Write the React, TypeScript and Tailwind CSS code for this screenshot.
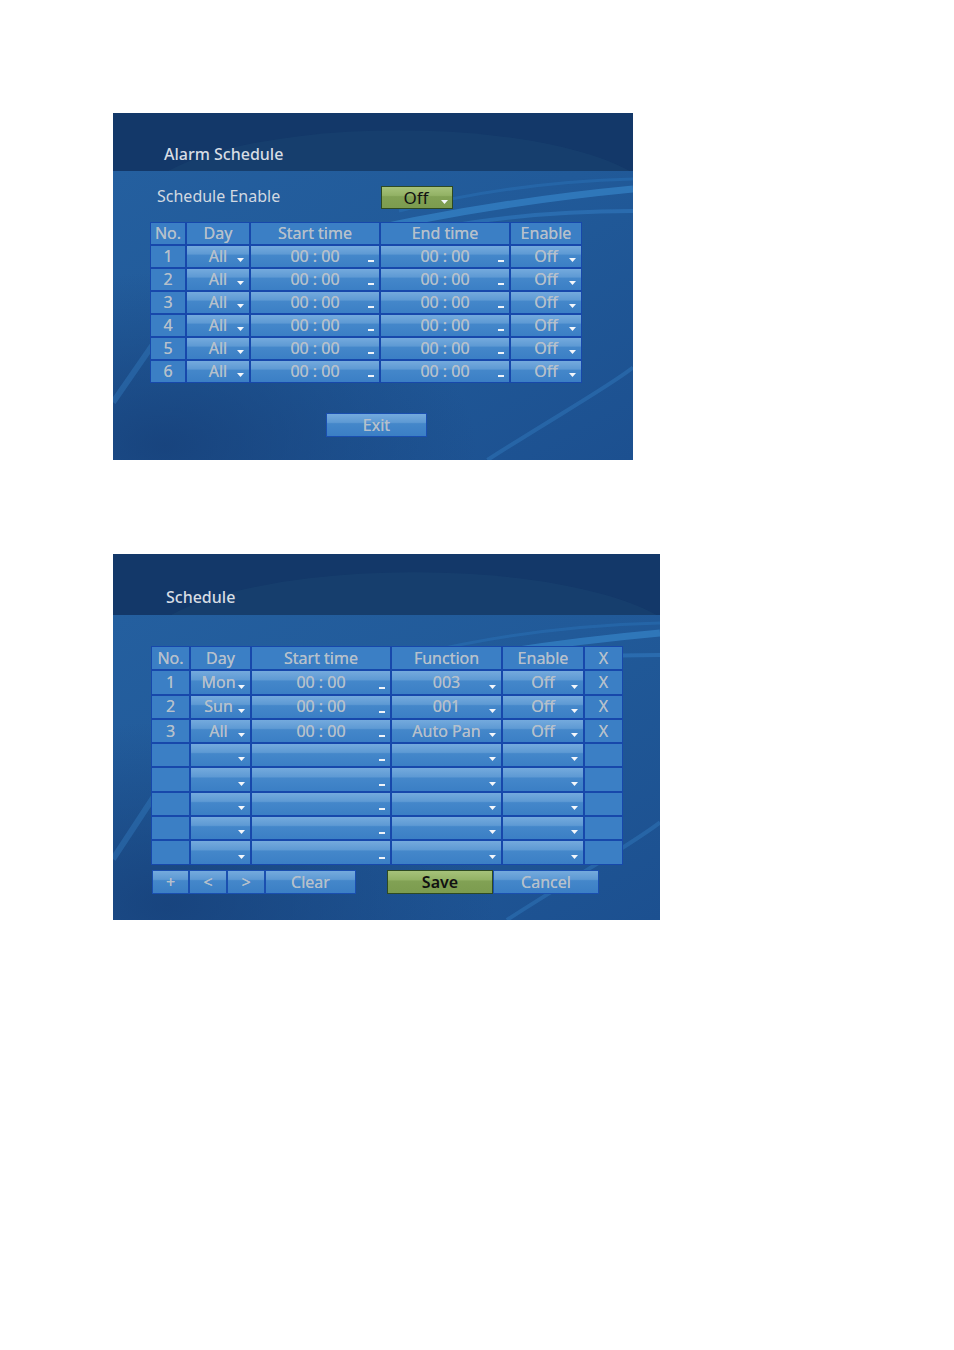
import React from "react";

const FONT = { fontFamily: '"Noto Sans", "DejaVu Sans", sans-serif' };

const cellGrad =
  "bg-[linear-gradient(to_bottom,#74aadd_0%,#5e9ad4_38%,#4487ca_44%,#3b7fc5_100%)]";
const flat = "bg-[#3b7fc5]";

function Arrow() {
  return (
    <svg
      className="absolute right-[5px] bottom-[5px]"
      width="7"
      height="4"
      viewBox="0 0 7 4"
    >
      <polygon points="0,0 7,0 3.5,4" fill="#f4f7fb" />
    </svg>
  );
}

function Dash() {
  return <div className="absolute right-[5px] bottom-[5px] w-[6px] h-[2px] bg-[#eef3f9]" />;
}

type Kind = "plain" | "head" | "drop" | "time" | "x";

function Cell({ kind, children, h }: { kind: Kind; children?: React.ReactNode; h: string }) {
  const bg = kind === "plain" || kind === "head" || kind === "x" ? flat : cellGrad;
  return (
    <div
      className={`relative flex items-center justify-center ${h} ${bg} text-[#b5c0cc] text-[16px] leading-none whitespace-nowrap`}
    >
      <span className="-mt-[1px] [text-shadow:0_0_0.4px_#b5c0cc]">{children}</span>
      {kind === "drop" && <Arrow />}
      {kind === "time" && <Dash />}
    </div>
  );
}

function BodyBg({ w, h }: { w: number; h: number }) {
  return (
    <svg
      className="absolute inset-0 pointer-events-none"
      width={w}
      height={h}
      viewBox={`0 0 ${w} ${h}`}
      preserveAspectRatio="none"
    >
      <defs>
        <linearGradient id={`g${w}`} x1="0" y1="0" x2="1" y2="1">
          <stop offset="0" stopColor="#245f9f" />
          <stop offset="0.45" stopColor="#215a99" />
          <stop offset="1" stopColor="#1c5090" />
        </linearGradient>
        <radialGradient id={`r${w}`} cx="0.1" cy="0.95" r="0.6">
          <stop offset="0" stopColor="#163f78" stopOpacity="0.8" />
          <stop offset="1" stopColor="#163f78" stopOpacity="0" />
        </radialGradient>
      </defs>
      <rect width={w} height={h} fill={`url(#g${w})`} />
      <rect width={w} height={h} fill={`url(#r${w})`} />
      <path
        d={`M ${w} 18 C ${w * 0.8} 28, ${w * 0.6} 45, ${w * 0.4} 70`}
        stroke="#3d8fd6"
        strokeOpacity="0.55"
        strokeWidth="7"
        fill="none"
      />
      <path
        d={`M ${w} 40 C ${w * 0.8} 40, ${w * 0.65} 52, ${w * 0.45} 75`}
        stroke="#3a8ad2"
        strokeOpacity="0.4"
        strokeWidth="4"
        fill="none"
      />
      <path
        d={`M ${w} 8 C ${w * 0.85} 10, ${w * 0.7} 20, ${w * 0.55} 40`}
        stroke="#2f7cc4"
        strokeOpacity="0.35"
        strokeWidth="3"
        fill="none"
      />
      <path
        d={`M 0 ${h * 0.8} C 20 ${h * 0.7}, 40 ${h * 0.6}, 60 ${h * 0.5}`}
        stroke="#3a86cc"
        strokeOpacity="0.35"
        strokeWidth="6"
        fill="none"
      />
      <path
        d={`M ${w * 0.72} ${h} C ${w * 0.85} ${h * 0.85}, ${w * 0.95} ${h * 0.75}, ${w} ${h * 0.68}`}
        stroke="#3a86cc"
        strokeOpacity="0.35"
        strokeWidth="4"
        fill="none"
      />
    </svg>
  );
}

function HeadBg({ w, h }: { w: number; h: number }) {
  return (
    <svg
      className="absolute inset-0 pointer-events-none"
      width={w}
      height={h}
      viewBox={`0 0 ${w} ${h}`}
      preserveAspectRatio="none"
    >
      <rect width={w} height={h} fill="#133869" />
      <ellipse cx={w * 0.55} cy={h * 1.6} rx={w * 0.5} ry={h * 1.3} fill="#18416f" opacity="0.7" />
    </svg>
  );
}

function Btn({
  children,
  w,
  green,
}: {
  children: React.ReactNode;
  w: string;
  green?: boolean;
}) {
  return (
    <div
      className={`${w} h-full flex items-center justify-center text-[16px] leading-none ${
        green
          ? "bg-[linear-gradient(to_bottom,#a6c27a_0%,#93b265_40%,#81a154_46%,#7c9c4f_100%)] text-[#111] border border-[#2e4a22] font-semibold"
          : `${cellGrad} text-[#b5c0cc] border border-[#1a4fb0] [text-shadow:0_0_0.4px_#b5c0cc]`
      }`}
    >
      {children}
    </div>
  );
}

export default function App() {
  const topRows = [1, 2, 3, 4, 5, 6];
  const th = "h-[21px]";
  const bh = "h-[22.3px]";
  const bottomData: [string, string, string, string, string, string][] = [
    ["1", "Mon", "00 : 00", "003", "Off", "X"],
    ["2", "Sun", "00 : 00", "001", "Off", "X"],
    ["3", "All", "00 : 00", "Auto Pan", "Off", "X"],
  ];
  return (
    <div className="bg-white w-[954px] h-[1350px] pt-[113px] pl-[113px]" style={FONT}>
      {/* Panel 1 */}
      <div className="w-[520px] h-[347px] flex flex-col">
        <div className="relative h-[58px] flex items-end pl-[51px] pb-[9px]">
          <HeadBg w={520} h={58} />
          <span className="relative text-[16px] leading-none text-[#d7dde4] font-medium">Alarm Schedule</span>
        </div>
        <div className="relative flex-1">
          <BodyBg w={520} h={289} />
          <div className="relative flex flex-col">
            <div className="flex items-center h-[23px] mt-[15px]">
              <span className="pl-[44px] w-[268px] text-[16px] text-[#d2d9e1] leading-none -mt-[3px]">Schedule Enable</span>
              <div className="relative w-[72px] h-[23px]">
                <Btn w="w-[72px]" green>
                  <span className="font-normal text-[17px] -ml-[2px]">Off</span>
                </Btn>
                <Arrow />
              </div>
            </div>
            <div className="ml-[37px] mt-[13px] w-[432px] bg-[#1748ab] p-[1px] grid grid-cols-[34px_62px_128px_128px_70px] gap-[2px]">
              <Cell kind="head" h={th}>No.</Cell>
              <Cell kind="head" h={th}>Day</Cell>
              <Cell kind="head" h={th}>Start time</Cell>
              <Cell kind="head" h={th}>End time</Cell>
              <Cell kind="head" h={th}>Enable</Cell>
              {topRows.map((n) => (
                <React.Fragment key={n}>
                  <Cell kind="plain" h={th}>{n}</Cell>
                  <Cell kind="drop" h={th}>All</Cell>
                  <Cell kind="time" h={th}>00 : 00</Cell>
                  <Cell kind="time" h={th}>00 : 00</Cell>
                  <Cell kind="drop" h={th}>Off</Cell>
                </React.Fragment>
              ))}
            </div>
            <div className="ml-[213px] mt-[30px] h-[24px] flex">
              <Btn w="w-[101px]">Exit</Btn>
            </div>
          </div>
        </div>
      </div>

      {/* Panel 2 */}
      <div className="w-[547px] h-[366px] mt-[94px] flex flex-col">
        <div className="relative h-[61px] flex items-end pl-[53px] pb-[10px]">
          <HeadBg w={547} h={61} />
          <span className="relative text-[16px] leading-none text-[#d7dde4] font-medium">Schedule</span>
        </div>
        <div className="relative flex-1">
          <BodyBg w={547} h={305} />
          <div className="relative flex flex-col">
            <div className="ml-[38px] mt-[31px] w-[472px] bg-[#1748ab] p-[1px] grid grid-cols-[37px_59px_138px_109px_80px_37px] gap-[2px]">
              <Cell kind="head" h={bh}>No.</Cell>
              <Cell kind="head" h={bh}>Day</Cell>
              <Cell kind="head" h={bh}>Start time</Cell>
              <Cell kind="head" h={bh}>Function</Cell>
              <Cell kind="head" h={bh}>Enable</Cell>
              <Cell kind="head" h={bh}>X</Cell>
              {bottomData.map((r) => (
                <React.Fragment key={r[0]}>
                  <Cell kind="plain" h={bh}>{r[0]}</Cell>
                  <Cell kind="drop" h={bh}>
                    <span className="-ml-[4px]">{r[1]}</span>
                  </Cell>
                  <Cell kind="time" h={bh}>{r[2]}</Cell>
                  <Cell kind="drop" h={bh}>{r[3]}</Cell>
                  <Cell kind="drop" h={bh}>{r[4]}</Cell>
                  <Cell kind="x" h={bh}>{r[5]}</Cell>
                </React.Fragment>
              ))}
              {[0, 1, 2, 3, 4].map((i) => (
                <React.Fragment key={`e${i}`}>
                  <Cell kind="plain" h={bh} />
                  <Cell kind="drop" h={bh} />
                  <Cell kind="time" h={bh} />
                  <Cell kind="drop" h={bh} />
                  <Cell kind="drop" h={bh} />
                  <Cell kind="x" h={bh} />
                </React.Fragment>
              ))}
            </div>
            <div className="ml-[39px] mt-[5px] h-[24px] flex">
              <Btn w="w-[37px]">+</Btn>
              <Btn w="w-[38px]">&lt;</Btn>
              <Btn w="w-[38px]">&gt;</Btn>
              <Btn w="w-[91px]">Clear</Btn>
              <div className="w-[31px]" />
              <Btn w="w-[106px]" green>Save</Btn>
              <Btn w="w-[106px]">Cancel</Btn>
            </div>
          </div>
        </div>
      </div>
    </div>
  );
}
